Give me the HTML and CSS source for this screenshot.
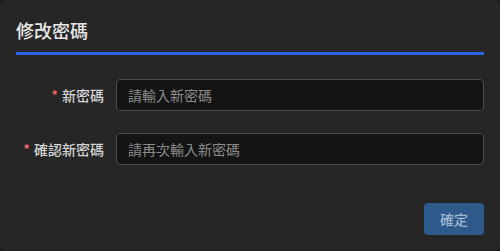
FILE: index.html
```html
<!DOCTYPE html>
<html>
<head>
    <title>修改密碼</title>
    <meta name="viewport" content="width=device-width, initial-scale=1.0">
    <link rel="stylesheet" href="styles.css">
</head>
<body>
    <div class="dialog">
        <div class="dialog-header">
            <span class="dialog-title">修改密碼</span>
        </div>

        <form class="dialog-body">
            <div class="form-row">
                <label class="form-label" for="new-password"><span class="required">*</span>新密碼</label>
                <input class="form-input" id="new-password" type="password" placeholder="請輸入新密碼">
            </div>
            <div class="form-row">
                <label class="form-label" for="confirm-password"><span class="required">*</span>確認新密碼</label>
                <input class="form-input" id="confirm-password" type="password" placeholder="請再次輸入新密碼">
            </div>
        </form>

        <div class="dialog-footer">
            <button class="btn-primary" disabled>確定</button>
        </div>
    </div>
</body>
</html>
```

FILE: styles.css
```css
html, body {
    margin: 0;
    height: 100%;
}

body {
    background-color: #1b1b1b;
    font-family: "Noto Sans CJK TC", "Noto Sans", sans-serif;
}

.dialog {
    height: 100%;
    box-sizing: border-box;
    background-color: #262626;
    border-radius: 6px;
    display: flex;
    flex-direction: column;
}

.dialog-header {
    margin: 0 16px;
    padding-top: 18px;
    padding-bottom: 10px;
    border-bottom: 3px solid #2b64e8;
}

.dialog-title {
    display: block;
    font-size: 18px;
    font-weight: 500;
    line-height: 24px;
    color: #e8e8e8;
}

.dialog-body {
    margin: 0;
    padding: 24px 16px 0 16px;
    display: flex;
    flex-direction: column;
    gap: 22px;
}

.form-row {
    display: flex;
    align-items: center;
}

.form-label {
    width: 88px;
    padding-right: 12px;
    text-align: right;
    font-size: 14px;
    font-weight: 500;
    color: #d4d4d4;
    flex-shrink: 0;
}

.required {
    color: #f56c6c;
    margin-right: 4px;
}

.form-input {
    flex: 1;
    height: 32px;
    box-sizing: border-box;
    background-color: #141414;
    border: 1px solid #4c4c4c;
    border-radius: 4px;
    padding: 0 11px;
    font-family: inherit;
    font-size: 14px;
    color: #e0e0e0;
    outline: none;
}

.form-input::placeholder {
    color: #8b8b8b;
}

.dialog-footer {
    margin-top: 38px;
    padding: 0 16px;
    display: flex;
    justify-content: flex-end;
}

.btn-primary {
    width: 60px;
    height: 32px;
    background-color: #2d5a8b;
    border: none;
    border-radius: 4px;
    font-family: inherit;
    font-size: 14px;
    font-weight: 500;
    color: #9fb6cf;
    cursor: not-allowed;
}
```
